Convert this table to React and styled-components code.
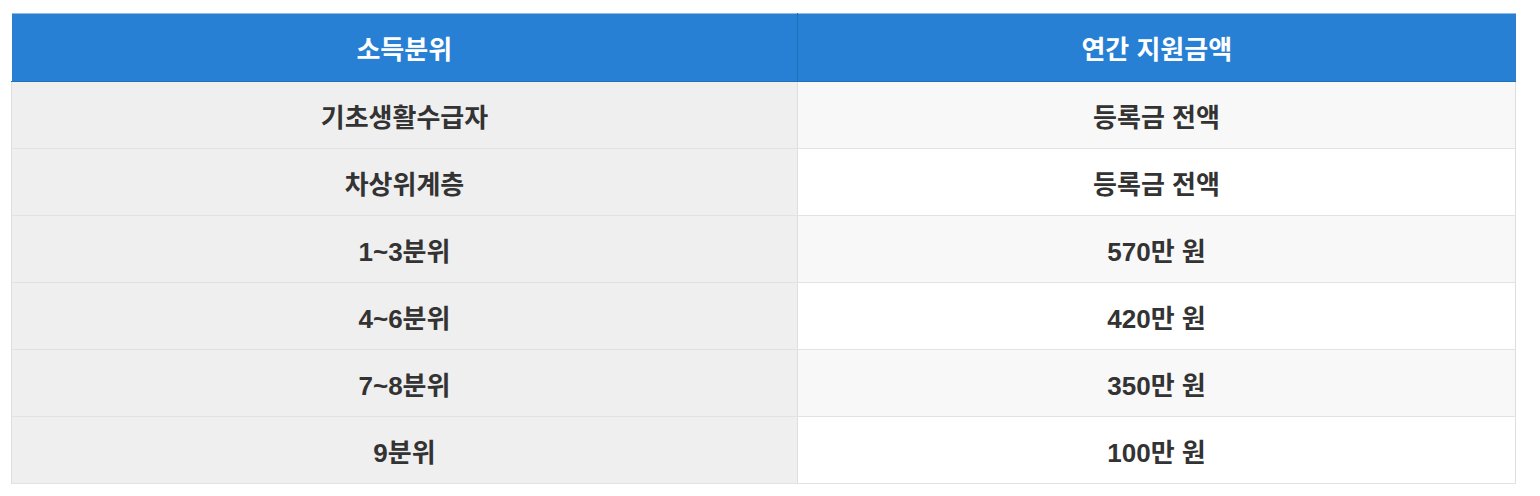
import React from "react";
import styled, { createGlobalStyle } from "styled-components";

const Global = createGlobalStyle`
  html, body { margin: 0; padding: 0; background: #fff; }
  body { font-family: "Liberation Sans", Arial, "Noto Sans CJK KR", sans-serif; }
`;

const Wrap = styled.div`
  padding: 13px 24px 0 11px;
`;

const Table = styled.table`
  width: 1505px;
  border-collapse: collapse;
  table-layout: fixed;
  font-family: "Liberation Sans", Arial, "Noto Sans CJK KR", sans-serif;
  font-weight: bold;
  font-size: 26px;
  color: #333;
  border-top: 1px solid #8fb9e6;
`;

const Th = styled.th`
  height: 67px;
  padding: 0;
  background: #2780d4;
  color: #fff;
  text-align: center;
  font-weight: bold;
  border-bottom: 1px solid #1f6fbd;
  & + & { border-left: 1px solid #1f6fbd; }
`;

const Td = styled.td`
  height: 66px;
  padding: 0;
  text-align: center;
  background: ${(p) => (p.$first ? "#efefef" : p.$odd ? "#f8f8f8" : "#ffffff")};
  border-bottom: 1px solid #e2e2e2;
  border-left: 1px solid #dedede;
  border-right: ${(p) => (p.$first ? "none" : "1px solid #dedede")};
`;

const rows = [
  ["기초생활수급자", "등록금 전액"],
  ["차상위계층", "등록금 전액"],
  ["1~3분위", "570만 원"],
  ["4~6분위", "420만 원"],
  ["7~8분위", "350만 원"],
  ["9분위", "100만 원"],
];

export default function App() {
  return (
    <>
      <Global />
      <Wrap>
        <Table>
          <colgroup>
            <col style={{ width: "786px" }} />
            <col />
          </colgroup>
          <thead>
            <tr>
              <Th>소득분위</Th>
              <Th>연간 지원금액</Th>
            </tr>
          </thead>
          <tbody>
            {rows.map(([a, b], i) => (
              <tr key={a}>
                <Td $first>{a}</Td>
                <Td $odd={i % 2 === 0}>{b}</Td>
              </tr>
            ))}
          </tbody>
        </Table>
      </Wrap>
    </>
  );
}
